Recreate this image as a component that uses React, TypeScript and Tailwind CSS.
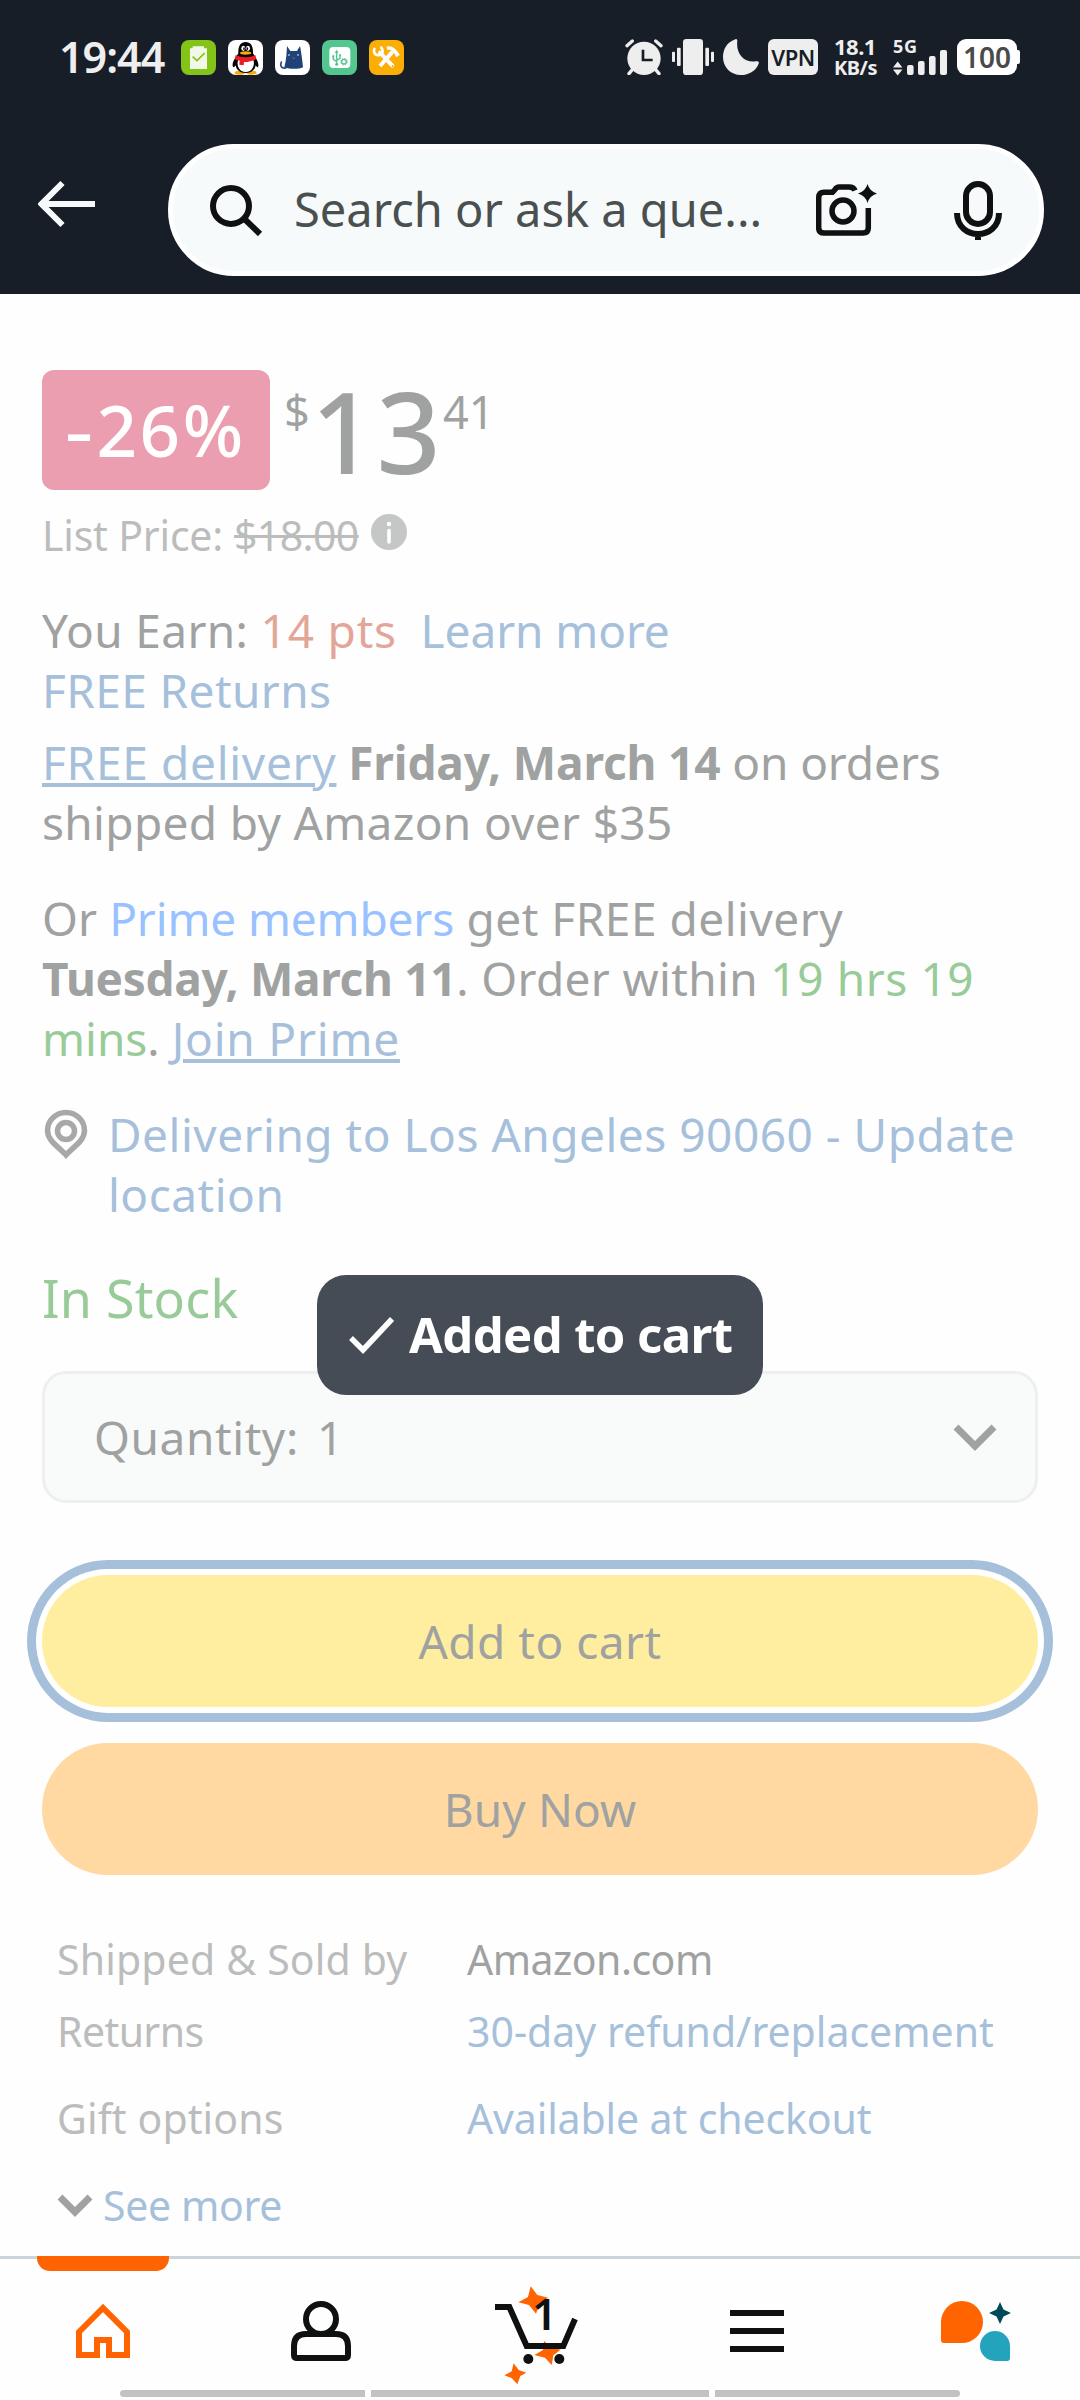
import type { ReactNode } from "react";

const sans = "font-['Noto_Sans','Open_Sans',sans-serif]";

function AppBadge({ className, children }: { className: string; children: ReactNode }) {
  return (
    <div className={`h-[35px] w-[35px] overflow-hidden rounded-[8px] ${className}`}>
      <svg viewBox="0 0 105 105" className="h-full w-full">
        {children}
      </svg>
    </div>
  );
}

function NotificationIcons() {
  return (
    <div className="ml-[17px] flex gap-[12px]">
      <AppBadge className="bg-[#84c318]">
        <path d="M35 19H69V25H78V87H27V25H35Z" fill="#f1f8e8" />
        <path d="M35 50L48 62L71 39" fill="none" stroke="#84c318" strokeWidth="5" />
      </AppBadge>
      <AppBadge className="bg-white">
        <ellipse cx="35" cy="98" rx="15" ry="6" fill="#f9ab0c" />
        <ellipse cx="71" cy="98" rx="15" ry="6" fill="#f9ab0c" />
        <path d="M31 40C30 18 38 6 53 6C68 6 76 18 75 40C82 52 93 66 91 78C90 84 86 82 83 76C81 90 70 99 53 99C36 99 25 90 23 76C20 82 16 84 14 78C12 66 24 52 31 40Z" fill="#050505" />
        <path d="M31 58H76C82 78 72 96 53 96C34 96 24 78 31 58Z" fill="#fff" />
        <path d="M23 45C40 54 66 54 82 45L85 57C74 63 62 66 48 66L47 76L34 74L35 62C29 61 23 59 20 57Z" fill="#ea1c25" />
        <ellipse cx="53" cy="39" rx="17" ry="5" fill="#f9ab0c" />
        <ellipse cx="46" cy="25" rx="6" ry="8" fill="#fff" />
        <ellipse cx="60" cy="25" rx="6" ry="8" fill="#fff" />
        <ellipse cx="48" cy="26" rx="2.5" ry="4" fill="#050505" />
        <ellipse cx="58" cy="26" rx="2.5" ry="4" fill="#050505" />
      </AppBadge>
      <AppBadge className="bg-white">
        <path d="M36 18L46 33H66L75 18C79 38 82 60 84 82C70 88 46 88 28 82C34 60 35 38 36 18Z" fill="#1f4277" />
        <path d="M32 84C20 86 14 78 19 66" fill="none" stroke="#1f4277" strokeWidth="5" strokeLinecap="round" />
        <circle cx="42" cy="45" r="2.5" fill="#fff" />
        <circle cx="69" cy="45" r="2.5" fill="#fff" />
        <path d="M53 53L56 56L59 53" fill="none" stroke="#9fb2d0" strokeWidth="2" />
      </AppBadge>
      <AppBadge className="bg-[#53c78f]">
        <rect x="22" y="21" width="63" height="63" rx="12" fill="#fff" />
        <g fill="none" stroke="#53c78f" strokeWidth="4">
          <path d="M44 34V74M34 50V58L44 65M54 48V55L44 61" />
          <circle cx="66" cy="65" r="7" />
          <circle cx="66" cy="65" r="10" strokeWidth="3" strokeDasharray="4 3.85" />
        </g>
        <path d="M38 38L44 29L50 38ZM31 46H37V53H31ZM51 43H57V49H51Z" fill="#53c78f" />
        <circle cx="44" cy="73" r="4.5" fill="#53c78f" />
      </AppBadge>
      <AppBadge className="bg-[#fbae05]">
        <g fill="none" stroke="#fff">
          <path d="M33 38L70 77" strokeWidth="12" strokeLinecap="round" />
          <path d="M71 35L33 78" strokeWidth="12" />
          <path d="M18 24A13 13 0 1 0 34 21" strokeWidth="8" />
          <path d="M54 25C66 21 74 26 84 42" strokeWidth="11" />
          <path d="M80 49L90 41" strokeWidth="8" />
        </g>
        <circle cx="71" cy="78" r="3" fill="#fbae05" />
      </AppBadge>
    </div>
  );
}

function StatusBar() {
  return (
    <div className="flex h-[114px] items-center pl-[59px] pr-[60px] text-[#efeeee]">
      <span className="w-[105px] whitespace-nowrap text-[43px] font-semibold leading-[58px] tracking-[-1px]">19:44</span>
      <NotificationIcons />
      <svg viewBox="0 0 114 108" className="ml-auto h-[36px] w-[38px]">
        <circle cx="57" cy="58" r="50" fill="#efeeee" />
        <g stroke="#efeeee" strokeWidth="10" strokeLinecap="round">
          <path d="M6 20L22 6M92 6L108 20M22 92L12 104M92 92L102 104" />
        </g>
        <path d="M54 32V63H83" fill="none" stroke="#181e28" strokeWidth="8" />
      </svg>
      <svg viewBox="0 0 126 108" className="ml-[9px] h-[36px] w-[42px]" fill="#efeeee">
        <rect x="33" width="60" height="108" rx="10" />
        <rect x="0" y="38" width="9" height="31" rx="3" />
        <rect x="15" y="26" width="11" height="55" rx="3" />
        <rect x="100" y="26" width="11" height="55" rx="3" />
        <rect x="117" y="38" width="9" height="31" rx="3" />
      </svg>
      <svg viewBox="0 0 108 108" className="ml-[9px] h-[36px] w-[36px]" fill="#efeeee">
        <path d="M34 2Q43 -3 43 6C38 42 62 72 98 67Q110 65 107 74C99 95 78 108 54 108C22 108 0 84 0 54C0 30 12 10 34 2Z" />
      </svg>
      <div className="ml-[9px] flex h-[36px] w-[50px] items-center justify-center rounded-[6px] bg-[#efeeee] text-[22px] font-semibold tracking-[-0.4px] text-[#181e28]">VPN</div>
      <div className="ml-[16px] w-[43px] whitespace-nowrap text-[20px] font-bold tracking-[-0.5px]">
        <div className="-mt-px text-[22px] leading-[21px]">18.1</div>
        <div className="leading-[21px]">KB/s</div>
      </div>
      <div className="ml-[16px] flex h-[36px] w-[55px] flex-col justify-between">
        <span className="h-[14px] text-[18px] font-bold leading-[14px] tracking-[0.8px]">5G</span>
        <svg viewBox="893 50 55 25" className="-mt-[3px] h-[25px] w-[55px] overflow-visible" fill="#efeeee">
          <path d="M893 67.5L897.7 61.5L902.4 67.5ZM893 69.5L897.7 75.5L902.4 69.5Z" />
          <rect x="907" y="65" width="6.6" height="10" rx="2" />
          <rect x="918" y="61" width="6.6" height="14" rx="2" />
          <rect x="929" y="56" width="6.6" height="19" rx="2" />
          <rect x="940" y="50" width="7" height="25" rx="2" />
        </svg>
      </div>
      <div className="ml-[9px] flex items-center">
        <div className="flex h-[36px] w-[60px] items-center justify-center rounded-[9px] bg-white text-[28px] font-semibold text-[#4a4a4a]">100</div>
        <div className="h-[14px] w-[3px] rounded-r-[2px] bg-white" />
      </div>
    </div>
  );
}

function SearchHeader() {
  return (
    <div className="flex pl-[38px] pr-[36px] pt-[30px]">
      <svg viewBox="38 180 58 48" className="mt-[36px] h-[48px] w-[58px]" fill="none" stroke="#f6fafb" strokeWidth="6">
        <path d="M62.5 183L41.5 204L62.5 225M42 204H95" />
      </svg>
      <div className="ml-[72px] flex h-[132px] flex-1 items-center rounded-full border-[5px] border-white bg-[#f6fafb] pl-[36px] pr-[36px]">
        <svg viewBox="209 184 54 54" className="h-[54px] w-[54px]" fill="none" stroke="#0f1111" strokeWidth="6">
          <circle cx="231" cy="207" r="18" />
          <path d="M243.5 219L260 235" />
        </svg>
        <span className="-mt-[2px] ml-[31px] w-[480px] whitespace-nowrap text-[47px] leading-[64px] text-[#4a4f50]">Search or ask a que...</span>
        <svg viewBox="816 184 61 52" className="ml-[42px] h-[52px] w-[61px]" fill="none" stroke="#0f1111" strokeWidth="5.5">
          <path d="M855 190.5C854 187.8 852 187 849 187H839C837 187 836 188 835 189.5L832.5 192.2H824Q818.7 192.2 818.7 198V228Q818.7 233 824 233H863Q868.3 233 868.3 228V208" />
          <circle cx="843" cy="211" r="11" />
          <path d="M867.5 184Q869.5 191.3 877 193.5Q869.5 195.7 867.5 203Q865.500 195.7 858 193.5Q865.5 191.3 867.5 184Z" fill="#0f1111" stroke="none" />
        </svg>
        <svg viewBox="953 180 50 60" className="ml-auto h-[60px] w-[50px]" fill="none" stroke="#0f1111" strokeWidth="6">
          <rect x="966" y="184" width="24" height="40" rx="12" />
          <path d="M957 213C957 241 999 241 999 213M978 234V240" />
        </svg>
      </div>
    </div>
  );
}

function Price() {
  return (
    <>
      <div className="flex h-[120px] items-start">
        <div className="flex h-[120px] w-[228px] items-start whitespace-nowrap rounded-[12px] bg-[#eb9eb0] pl-[26px] text-[71px] font-medium leading-[119px] tracking-[2.6px] text-white">
          <span className="mr-[3px] inline-block scale-x-125">-</span>26%
        </div>
        <span className="ml-[14px] w-[27px] text-[45px] leading-[81px]">$</span>
        <span className="w-[130px] text-[112px] font-medium leading-[121px] tracking-[1.5px]">13</span>
        <span className="ml-[2px] text-[45px] leading-[83px]">41</span>
      </div>
      <div className="mt-[16px] flex h-[56px] whitespace-pre text-[41px] leading-[58px] text-[#bbbdbc]">
        <span className="w-[192px] tracking-[-0.2px]">List Price: </span>
        <span className="tracking-[-0.6px] line-through decoration-[3px]">$18.00</span>
        <svg viewBox="0 0 36 36" className="ml-[12px] mt-[8px] h-[36px] w-[36px]">
          <circle cx="18" cy="18" r="18" fill="#c5c7c6" />
          <circle cx="18" cy="10" r="2.2" fill="#fff" />
          <path d="M18 16.500V28" stroke="#fff" strokeWidth="3.6" strokeLinecap="round" />
        </svg>
      </div>
    </>
  );
}

function Delivery() {
  return (
    <div className="whitespace-pre text-[46px] leading-[60px]">
      <div className="mt-[38px]">
        <div>
          <span className="tracking-[0.35px]">You Earn: </span>
          <span className="tracking-[0.8px] text-[#e2a698]">14 pts</span>
          <span className="tracking-[-0.1px] text-[#a6c0db]">{"  Learn more"}</span>
        </div>
        <div className="tracking-[0.4px] text-[#a6c0db]">FREE Returns</div>
      </div>
      <div className="mt-[12px]">
        <div>
          <span className="tracking-[0.7px] text-[#a6c0db] underline decoration-[4px] underline-offset-[3px]">FREE delivery</span>
          <span className="font-bold tracking-[-0.15px]"> Friday, March 14</span>
          <span className="tracking-[-0.1px]"> on orders</span>
        </div>
        <div className="tracking-[0.33px]">shipped by Amazon over $35</div>
      </div>
      <div className="mt-[36px]">
        <div>
          <span className="tracking-[0.1px]">Or </span>
          <span className="tracking-[-0.15px] text-[#99c1ff]">Prime members</span>
          <span className="tracking-[0.5px]"> get FREE delivery</span>
        </div>
        <div>
          <span className="font-bold tracking-[-0.32px]">Tuesday, March 11</span>
          <span className="tracking-[0.35px]">. Order within </span>
          <span className="tracking-[0.6px] text-[#99cb98]">19 hrs 19</span>
        </div>
        <div>
          <span className="text-[#99cb98]">mins</span>. <span className="tracking-[0.8px] text-[#a6c0db] underline decoration-[4px] underline-offset-[3px]">Join Prime</span>
        </div>
      </div>
      <div className="mt-[36px] flex text-[#a6c0db]">
        <svg viewBox="44 1109 44 50" className="ml-[2px] mt-[5px] h-[50px] w-[44px]" fill="none" stroke="#a8a8a8" strokeWidth="5.500">
          <path d="M66 1155C59 1147 47.500 1141 47.500 1130.500A18.500 18 0 0 1 84.500 1130.500C84.500 1141 73 1147 66 1155Z" />
          <circle cx="66" cy="1131" r="8.500" />
        </svg>
        <div className="ml-[20px] tracking-[0.5px]">
          <div>Delivering to Los Angeles 90060 - Update</div>
          <div>location</div>
        </div>
      </div>
    </div>
  );
}

function Purchase() {
  return (
    <div className="text-[46px]">
      <div className="mt-[38px] text-[52px] leading-[72px] tracking-[0.2px] text-[#99cb98]">In Stock</div>
      <div className="mt-[37px] flex h-[132px] items-center rounded-[24px] border-[3px] border-[#eeefef] bg-[#f9fbfa] pl-[49px] pr-[38px]">
        <span className="w-[223px] whitespace-pre tracking-[0.6px]">Quantity: </span>
        <span>1</span>
        <svg viewBox="0 0 44 30" className="ml-auto mt-[2px] h-[30px] w-[44px]" fill="none" stroke="#a0a1a1" strokeWidth="7">
          <path d="M3 4L22 23L41 4" />
        </svg>
      </div>
      <button className="mt-[72px] flex h-[132px] w-full items-center justify-center rounded-full bg-[#ffeea0] tracking-[0.48px] ring-[9px] ring-[#a6c0db] ring-offset-[6px] ring-offset-white">
        Add to cart
      </button>
      <button className="mt-[36px] flex h-[132px] w-full items-center justify-center rounded-full bg-[#ffd9a1] tracking-[0.1px]">
        Buy Now
      </button>
    </div>
  );
}

function Details() {
  return (
    <div className="mt-[56px] whitespace-nowrap pl-[15px] text-[41px] leading-[56px]">
      <div className="grid grid-cols-[410px_1fr]">
        <span className="tracking-[0.16px] text-[#bbbdbc]">Shipped &amp; Sold by</span>
        <span className="tracking-[-0.5px]">Amazon.com</span>
        <span className="mt-[16px] tracking-[-0.6px] text-[#bbbdbc]">Returns</span>
        <span className="mt-[16px] text-[#a6c0db]">30-day refund/replacement</span>
        <span className="mt-[31px] tracking-[0.1px] text-[#bbbdbc]">Gift options</span>
        <span className="mt-[31px] tracking-[-0.12px] text-[#a6c0db]">Available at checkout</span>
      </div>
      <div className="mt-[31px] flex text-[#a6c0db]">
        <svg viewBox="0 0 36 24" className="mt-[17px] h-[24px] w-[36px]" fill="none" stroke="#a0a2a1" strokeWidth="7">
          <path d="M3 3L18 18L33 3" />
        </svg>
        <span className="ml-[10px] tracking-[-0.35px]">See more</span>
      </div>
    </div>
  );
}

function BottomNav() {
  return (
    <nav className="relative mt-auto h-[144px] border-t-[3px] border-[#cad5d9] bg-[#fefefe]">
      <div className="-mt-[3px] ml-[37px] h-[15px] w-[132px] rounded-b-[13px] bg-[#ff6400]" />
      <div className="flex h-[119px] items-start pl-[76px]">
        <svg viewBox="76 2304 54 54" className="mt-[33px] h-[54px] w-[54px]" fill="none" stroke="#ff6400" strokeWidth="6">
          <path d="M79 2332L103 2308L127 2332V2355H109V2340H97V2355H79Z" />
        </svg>
        <svg viewBox="291 2301 60 60" className="ml-[161px] mt-[30px] h-[60px] w-[60px]" fill="none" stroke="#0f1111" strokeWidth="6">
          <circle cx="321" cy="2319" r="15" />
          <rect x="294" y="2334" width="54" height="24" rx="3" fill="#fefefe" stroke="none" />
          <path d="M306 2334H336Q348 2334 348 2346V2355Q348 2358 345 2358H297Q294 2358 294 2355V2346Q294 2334 306 2334Z" />
        </svg>
        <div className="relative ml-[134px] mt-[4px] h-[115px] w-[105px]">
          <svg viewBox="0 0 315 345" className="h-[115px] w-[105px]">
            <g fill="#ff6400">
              <path d="M137 34L157 60L190 68L165 84L153 116L132 90L100 82L129 66Z" />
              <path d="M177 197L195 217L227 224L205 241L200 270L180 248L148 240L174 225Z" />
              <path d="M86 265L101 285L124 293L106 303L97 328L80 309L58 301L80 289Z" />
            </g>
            <path d="M30 96H73L125 213H235L270 132" fill="none" stroke="#0f1111" strokeWidth="18" />
            <circle cx="130" cy="252" r="15" fill="#0f1111" />
            <circle cx="223" cy="252" r="15" fill="#0f1111" />
          </svg>
          <span className="absolute left-[47px] top-[8px] text-[44px] font-semibold leading-[60px] text-[#0f1111]">1</span>
        </div>
        <div className="ml-[140px] mt-[39px] flex flex-col gap-[12px]">
          <div className="h-[6px] w-[54px] bg-[#0f1111]" />
          <div className="h-[6px] w-[54px] bg-[#0f1111]" />
          <div className="h-[6px] w-[54px] bg-[#0f1111]" />
        </div>
        <svg viewBox="941 2301 70 60" className="ml-[157px] mt-[30px] h-[60px] w-[70px]">
          <path d="M941 2322A21 21 0 0 1 983 2322A21 21 0 0 1 962 2343H944Q941 2343 941 2340Z" fill="#ff6400" />
          <path d="M980 2346A15 15 0 0 1 1010 2346V2358Q1010 2361 1007 2361H995A15 15 0 0 1 980 2346Z" fill="#24a4bc" />
          <path d="M1000 2302L1003.500 2309.500L1011 2313L1003.500 2316.500L1000 2324L996.500 2316.500L989 2313L996.500 2309.500Z" fill="#004b5a" />
        </svg>
      </div>
      <div className="flex h-[7px] gap-[6px] pl-[120px]">
        <div className="w-[245px] rounded-l-full bg-[#c2c2c2]" />
        <div className="w-[338px] bg-[#c2c2c2]" />
        <div className="w-[245px] rounded-r-full bg-[#c2c2c2]" />
      </div>
    </nav>
  );
}

function Toast() {
  return (
    <div className="absolute left-[317px] top-[1275px] flex h-[120px] w-[446px] items-center rounded-[29px] bg-[#454c56] pl-[32px] text-white">
      <svg viewBox="0 0 45 38" className="h-[38px] w-[45px]" fill="none" stroke="#fff" strokeWidth="5.500">
        <path d="M2 22L14 34L43 3" />
      </svg>
      <span className="-mt-[2px] ml-[15px] whitespace-nowrap text-[49px] font-bold leading-[60px] tracking-[-0.6px]">Added to cart</span>
    </div>
  );
}

export default function App() {
  return (
    <div className={`relative flex h-[2400px] w-[1080px] flex-col overflow-hidden bg-[#fefefe] text-[#a0a2a1] ${sans}`}>
      <header className="h-[294px] bg-[#181e28]">
        <StatusBar />
        <SearchHeader />
      </header>
      <main className="px-[42px] pt-[76px]">
        <Price />
        <Delivery />
        <Purchase />
        <Details />
      </main>
      <BottomNav />
      <Toast />
    </div>
  );
}
